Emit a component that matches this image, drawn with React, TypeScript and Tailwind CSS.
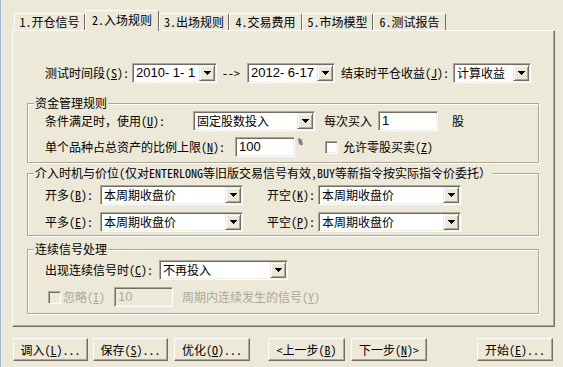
import type { ReactNode } from "react";

// Classic Windows "测试设置" dialog, step 2 (入场规则)

const SANS = "font-['Liberation_Sans',Arial,sans-serif] text-[13px]";

function Acc({ k }: { k: string }) {
  return (
    <>
      (<span className="underline underline-offset-[1px]">{k}</span>)
    </>
  );
}

function DropBtn() {
  return (
    <div className="flex h-[16px] w-[16px] shrink-0 items-center justify-center border border-t-[#ECE9D8] border-l-[#ECE9D8] border-r-[#716F64] border-b-[#716F64] bg-[#ECE9D8] shadow-[inset_1px_1px_0_#fff,inset_-1px_-1px_0_#ACA899]">
      <svg width="7" height="4" viewBox="0 0 7 4" shapeRendering="crispEdges">
        <rect x="0" y="0" width="7" height="1" fill="#000" />
        <rect x="1" y="1" width="5" height="1" fill="#000" />
        <rect x="2" y="2" width="3" height="1" fill="#000" />
        <rect x="3" y="3" width="1" height="1" fill="#000" />
      </svg>
    </div>
  );
}

function Sunken({ className, children }: { className: string; children?: ReactNode }) {
  return (
    <div
      className={`flex h-[20px] shrink-0 items-center border border-t-[#ACA899] border-l-[#ACA899] border-r-white border-b-white p-[1px] shadow-[inset_1px_1px_0_#716F64,inset_-1px_-1px_0_#F1EFE2] ${className}`}
    >
      {children}
    </div>
  );
}

function Combo({ w, text, sans }: { w: string; text: string; sans?: boolean }) {
  return (
    <Sunken className={`bg-white ${w}`}>
      <span className={`min-w-0 flex-1 whitespace-nowrap pl-[2px] ${sans ? SANS : ""}`}>{text}</span>
      <DropBtn />
    </Sunken>
  );
}

function Check({ disabled }: { disabled?: boolean }) {
  return (
    <div
      className={`h-[13px] w-[13px] shrink-0 border border-t-[#ACA899] border-l-[#ACA899] border-r-white border-b-white shadow-[inset_1px_1px_0_#716F64,inset_-1px_-1px_0_#F1EFE2] ${
        disabled ? "bg-[#ECE9D8]" : "bg-white"
      }`}
    />
  );
}

function Group({ title, className, children }: { title: ReactNode; className: string; children: ReactNode }) {
  return (
    <div
      className={`relative ml-[14px] w-[512px] border border-[#ACA899] shadow-[inset_1px_1px_0_#fff,1px_1px_0_#fff] ${className}`}
    >
      <div className="absolute left-[6px] top-[-7px] whitespace-nowrap bg-[#ECE9D8] px-[1px] leading-[12px]">{title}</div>
      {children}
    </div>
  );
}

function Tab({ w, label, active }: { w: string; label: string; active?: boolean }) {
  return (
    <div
      className={`flex shrink-0 items-center justify-center whitespace-nowrap rounded-t-[2px] border-t border-l border-white border-r border-r-[#716F64] ${w} ${
        active ? "relative z-10 -mb-[1px] h-[21px] bg-[#ECE9D8] pb-[2px]" : "h-[17px]"
      }`}
    >
      {label}
    </div>
  );
}

function Btn({ w, ml, children }: { w: string; ml: string; children: ReactNode }) {
  return (
    <div
      className={`flex h-[23px] shrink-0 items-center justify-center whitespace-nowrap border border-white border-r-[#716F64] border-b-[#716F64] shadow-[inset_-1px_-1px_0_#ACA899] ${w} ${ml}`}
    >
      {children}
    </div>
  );
}

export default function App() {
  return (
    <div className="h-[367px] w-[563px] overflow-hidden border-l border-[#A9B4CE] bg-[#ECE9D8] font-['Noto_Sans_Mono_CJK_SC','Noto_Sans_CJK_SC',sans-serif] text-[12px] leading-[14px] text-black">
      {/* tab strip */}
      <div className="flex h-[30px] items-end pl-[13px]">
        <Tab w="w-[71px]" label="1.开仓信号" />
        <Tab w="w-[74px]" label="2.入场规则" active />
        <Tab w="w-[70px]" label="3.出场规则" />
        <Tab w="w-[73px]" label="4.交易费用" />
        <Tab w="w-[71px]" label="5.市场模型" />
        <Tab w="w-[73px]" label="6.测试报告" />
      </div>

      {/* tab page */}
      <div className="ml-[11px] h-[297px] w-[543px] border border-white border-r-[#716F64] border-b-[#716F64] shadow-[inset_-1px_-1px_0_#ACA899]">
        <div className="mt-[32px] flex h-[20px] items-center pl-[32px]">
          <span className="w-[87px] shrink-0 whitespace-nowrap">
            测试时间段<Acc k="S" />:
          </span>
          <Combo w="w-[85px]" text="2010- 1- 1" sans />
          <span className="ml-[5px] w-[25px] shrink-0">--&gt;</span>
          <Combo w="w-[88px]" text="2012- 6-17" sans />
          <span className="ml-[6px] w-[112px] shrink-0 whitespace-nowrap">
            结束时平仓收益<Acc k="J" />:
          </span>
          <Combo w="w-[78px]" text="计算收益" />
        </div>

        <Group title="资金管理规则" className="mt-[20px] h-[60px]">
          <div className="mt-[7px] flex h-[20px] items-center pl-[17px]">
            <span className="w-[148px] shrink-0 whitespace-nowrap">
              条件满足时，使用<Acc k="U" />:
            </span>
            <Combo w="w-[122px]" text="固定股数投入" />
            <span className="ml-[9px] w-[54px] shrink-0">每次买入</span>
            <Sunken className="w-[60px] bg-white">
              <span className={`pl-[2px] ${SANS}`}>1</span>
            </Sunken>
            <span className="ml-[14px]">股</span>
          </div>
          <div className="mt-[6px] flex h-[20px] items-center pl-[17px]">
            <span className="w-[190px] shrink-0 whitespace-nowrap">
              单个品种占总资产的比例上限<Acc k="N" />:
            </span>
            <Sunken className="w-[60px] bg-white">
              <span className={`pl-[2px] ${SANS}`}>100</span>
            </Sunken>
            <span className="ml-[3px] w-[27px] shrink-0 self-start text-[9px] leading-[9px]">%</span>
            <Check />
            <span className="ml-[5px] whitespace-nowrap">
              允许零股买卖<Acc k="Z" />
            </span>
          </div>
        </Group>

        <Group
          title="介入时机与价位(仅对ENTERLONG等旧版交易信号有效,BUY等新指令按实际指令价委托）"
          className="mt-[10px] h-[63px]"
        >
          <div className="mt-[11px] flex h-[20px] items-center pl-[17px]">
            <span className="w-[55px] shrink-0 whitespace-nowrap">
              开多<Acc k="B" />:
            </span>
            <Combo w="w-[143px]" text="本周期收盘价" />
            <span className="ml-[24px] w-[51px] shrink-0 whitespace-nowrap">
              开空<Acc k="K" />:
            </span>
            <Combo w="w-[143px]" text="本周期收盘价" />
          </div>
          <div className="mt-[7px] flex h-[20px] items-center pl-[17px]">
            <span className="w-[55px] shrink-0 whitespace-nowrap">
              平多<Acc k="E" />:
            </span>
            <Combo w="w-[143px]" text="本周期收盘价" />
            <span className="ml-[24px] w-[51px] shrink-0 whitespace-nowrap">
              平空<Acc k="P" />:
            </span>
            <Combo w="w-[143px]" text="本周期收盘价" />
          </div>
        </Group>

        <Group title="连续信号处理" className="mt-[13px] h-[65px]">
          <div className="mt-[10px] flex h-[20px] items-center pl-[17px]">
            <span className="w-[114px] shrink-0 whitespace-nowrap">
              出现连续信号时<Acc k="C" />:
            </span>
            <Combo w="w-[129px]" text="不再投入" />
          </div>
          <div className="mt-[7px] flex h-[20px] items-center pl-[20px] text-[#ACA899]">
            <Check disabled />
            <span className="ml-[2px] w-[51px] shrink-0 whitespace-nowrap">
              忽略<Acc k="I" />
            </span>
            <Sunken className="w-[59px] bg-[#ECE9D8]">
              <span className={`pl-[2px] ${SANS}`}>10</span>
            </Sunken>
            <span className="ml-[9px] whitespace-nowrap">
              周期内连续发生的信号<Acc k="Y" />
            </span>
          </div>
        </Group>
      </div>

      {/* bottom buttons */}
      <div className="mt-[11px] flex">
        <Btn w="w-[75px]" ml="ml-[12px]">
          调入<Acc k="L" />...
        </Btn>
        <Btn w="w-[75px]" ml="ml-[5px]">
          保存<Acc k="S" />...
        </Btn>
        <Btn w="w-[76px]" ml="ml-[6px]">
          优化<Acc k="O" />...
        </Btn>
        <Btn w="w-[77px]" ml="ml-[18px]">
          &lt;上一步<Acc k="B" />
        </Btn>
        <Btn w="w-[76px]" ml="ml-[6px]">
          下一步<Acc k="N" />&gt;
        </Btn>
        <Btn w="w-[76px]" ml="ml-[50px]">
          开始<Acc k="E" />...
        </Btn>
      </div>
    </div>
  );
}
